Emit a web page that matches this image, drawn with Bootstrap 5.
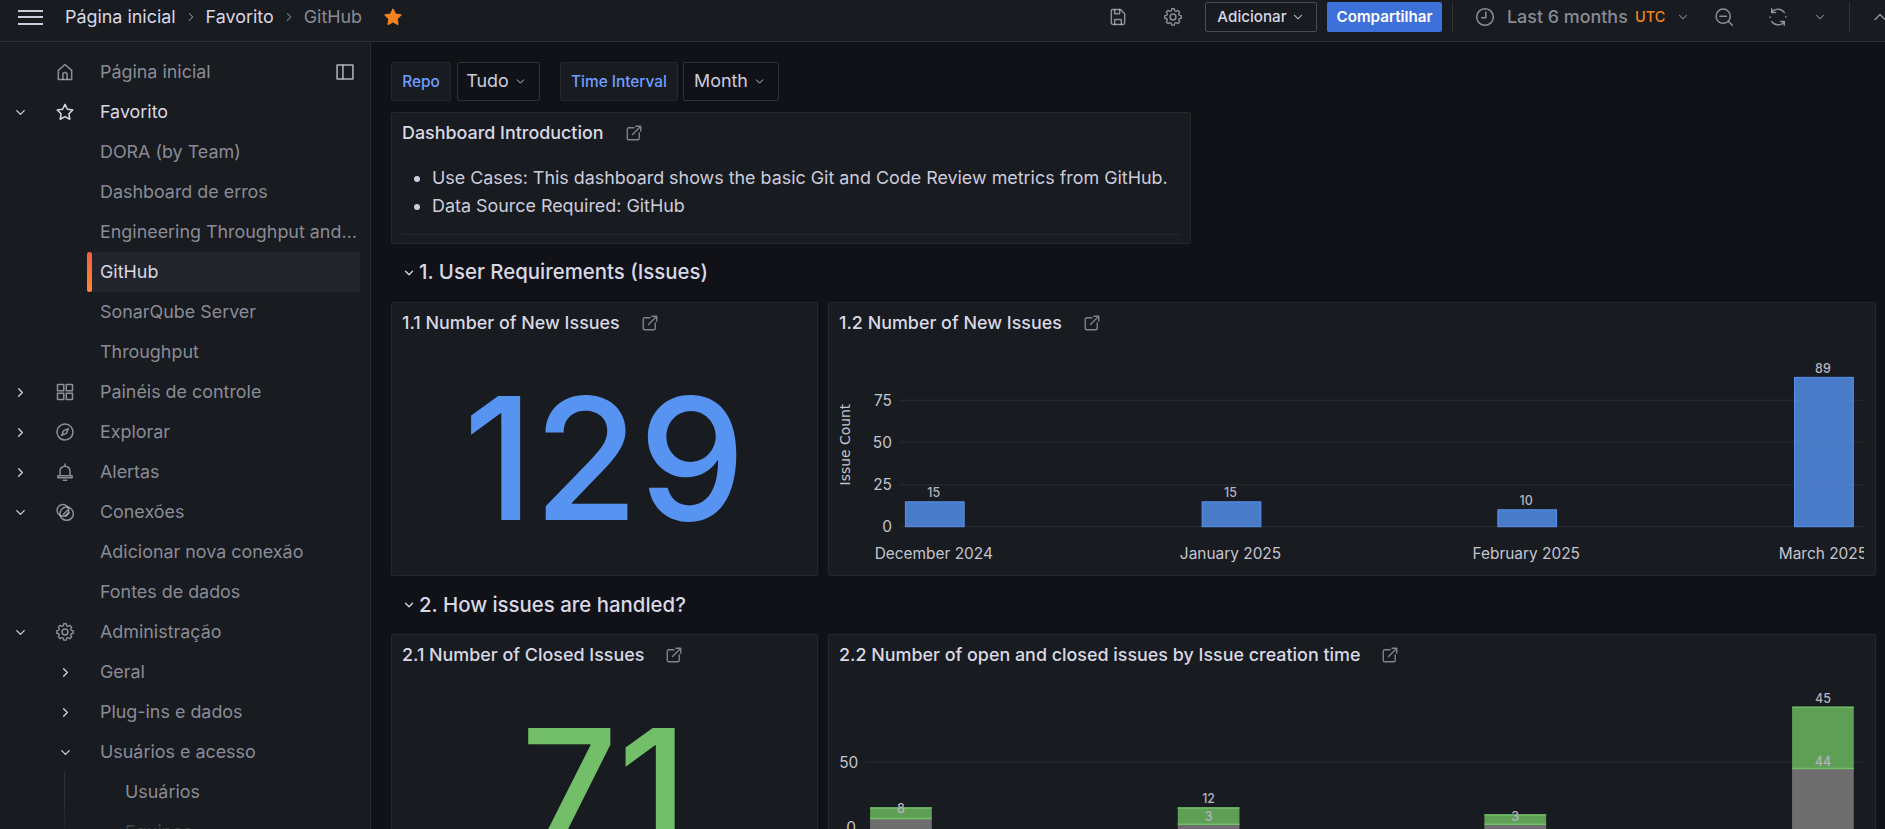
<!DOCTYPE html>
<html lang="pt-BR">
<head>
    <meta charset="UTF-8">
    <meta name="viewport" content="width=device-width, initial-scale=1.0">
    <title>GitHub - Grafana</title>
    <link href="https://cdn.jsdelivr.net/npm/bootstrap@5.3.3/dist/css/bootstrap.min.css" rel="stylesheet">
    <style>
        html, body { height: 829px; overflow: hidden; }
        body { background: #111217; color: #ccccdc; font-family: Inter, "Liberation Sans", sans-serif; font-size: 17.9px; }
        svg.gf-ic { width: 20px; height: 20px; fill: none; stroke: currentColor; stroke-width: 1.8; stroke-linecap: round; stroke-linejoin: round; flex: none; }

        .gf-top { height: 42px; background: #181b1f; border-bottom: 1px solid #2f3136; overflow: hidden; padding-bottom: 9px; padding-top: 2px; }
        .gf-burger { margin-left: 18px; width: 25px; height: 15px; border-top: 2px solid #ccccdc; border-bottom: 2px solid #ccccdc; position: relative; flex: none; }
        .gf-burger::after { content: ""; position: absolute; left: 0; right: 0; top: 4.5px; border-top: 2px solid #ccccdc; }
        .gf-crumb { margin-left: 22px; color: #d8d8e6; }
        .gf-crumb .gf-sep { width: 30px; color: #8e8e99; display: flex; justify-content: center; }
        .gf-crumb .gf-sep svg { width: 14px; height: 14px; }
        .gf-dim { color: rgba(204,204,220,.65); }
        .gf-star { margin-left: 21px; color: #f2831f; fill: currentColor !important; }
        .gf-tools { color: rgba(204,204,220,.65); margin-right: -5px; }
        .gf-gear { margin-left: 35px; }
        .gf-add { margin-left: 22px; width: 112px; height: 30px; border: 1px solid #4a4c52; border-radius: 2px; color: #d8d8e6; font-size: 15.2px; font-weight: 500; }
        .gf-add svg { width: 14px; height: 14px; margin-left: 4px; }
        .gf-share { margin-left: 10px; width: 115px; height: 30px; background: #3d71d9; color: #fff; border-radius: 2px; font-size: 15.2px; font-weight: 600; }
        .gf-div { width: 1px; height: 30px; background: #2f3136; margin-left: 10px; }
        .gf-clock { margin-left: 22px; }
        .gf-range { margin-left: 12px; width: 120px; white-space: nowrap; font-weight: 500; }
        .gf-utc { margin-left: 8px; width: 36px; color: #f2831f; font-size: 14.5px; font-weight: 500; }
        .gf-chev-sm { width: 14px !important; height: 14px !important; }
        .gf-tz-chev { margin-left: 5px; }
        .gf-zoom { margin-left: 24px; }
        .gf-sync { margin-left: 34px; }
        .gf-sync-chev { margin-left: 25px; }
        .gf-div2 { margin-left: 22px; }
        .gf-up { margin-left: 20px; }

        .gf-body { height: 787px; }
        .gf-side { width: 371px; flex: none; background: #181b1f; border-right: 1px solid #2a2c31; padding-top: 10px; overflow: hidden; position: relative; }
        .gf-side::after { content: ""; position: absolute; left: 0; right: 0; bottom: 0; height: 30px; background: linear-gradient(rgba(24,27,31,0), rgba(24,27,31,.7)); }
        .gf-item { height: 40px; color: rgba(204,204,220,.65); white-space: nowrap; position: relative; }
        .gf-item.gf-on { color: #d8d8e6; }
        .gf-slot-a { width: 40px; display: flex; justify-content: center; flex: none; color: #ccccdc; }
        .gf-slot-a svg { width: 15px; height: 15px; stroke-width: 2.2; }
        .gf-slot-b { width: 50px; display: flex; justify-content: center; flex: none; }
        .gf-lab { margin-left: 10px; }
        .gf-sub { padding-left: 100px; }
        .gf-sub2 { padding-left: 125px; }
        .gf-sub2::before { content: ""; position: absolute; left: 64px; top: 0; bottom: 0; border-left: 1px solid #2f3136; }
        .gf-nest { padding-left: 40px; }
        .gf-nest .gf-slot-b { width: 50px; color: #ccccdc; }
        .gf-nest .gf-slot-b svg { width: 15px; height: 15px; stroke-width: 2.2; }
        .gf-active { margin-left: 87px; width: 273px; padding-left: 13px; background: #22252b; border-radius: 2px; color: #d8d8e6; }
        .gf-active::before { content: ""; position: absolute; left: 0; top: 0; bottom: 0; width: 5px; border-radius: 3px; background: linear-gradient(#f55f3e, #ff8833); }
        .gf-dock { position: absolute; left: 335px; top: 20px; color: #b4b4c0; }
        .gf-clip { width: 257px; overflow: hidden; text-overflow: ellipsis; }

        .gf-main { flex: 1; padding: 20px 9px 0 20px; overflow: hidden; min-width: 0; }
        .gf-filters { height: 39px; margin-bottom: 11px; }
        .gf-flabel { height: 39px; background: #181b1f; border: 1px solid #25272c; border-radius: 2px; color: #6e9fff; font-size: 15.4px; font-weight: 500; }
        .gf-fval { height: 39px; background: #111217; border: 1px solid #2f3136; border-radius: 2px; color: #ccccdc; margin-left: 6px; }
        .gf-fval svg { width: 13px; height: 13px; margin-left: 5px; }
        #fRepo { width: 60px; }
        #fTudo { width: 83px; padding-right: 4px; }
        #fTime { width: 118px; margin-left: 20px; }
        #fMonth { width: 96px; margin-left: 5px; padding-right: 2px; }
        .gf-panel { background: #181b1f; border: 1px solid #25272c; border-radius: 2px; overflow: hidden; }
        .gf-ptitle { height: 42px; padding: 0 0 2px 10px; font-weight: 500; color: #d8d8e6; white-space: nowrap; flex: none; }
        .gf-ptitle svg { margin-left: 21px; width: 18px; height: 18px; color: rgba(204,204,220,.6); }
        #intro { width: 800px; height: 132px; }
        #intro ul { margin: 9px 10px 0; padding: 0 0 14px 30px; border-bottom: 1px solid #25272c; }
        #intro li { height: 28px; line-height: 28px; white-space: nowrap; }
        .gf-section { height: 58px; font-size: 20.4px; font-weight: 500; color: #d8d8e6; padding: 0 0 1px 11px; }
        .gf-section svg { width: 14px; height: 14px; margin-right: 3px; stroke-width: 2.2; }
        #sec2 { padding-bottom: 0; }
        .gf-rowp { gap: 10px; }
        .gf-stat { width: 427px; height: 274px; flex: none; }
        .gf-chart { flex: 1; height: 274px; min-width: 0; }
        .gf-chart > svg { display: block; }
        .gf-num { font-size: 170px; line-height: 1; font-weight: 500; flex: 1; padding-bottom: 4px; }
        .gf-blue { color: #5794f2; }
        .gf-green { color: #73bf69; }
        #stat71 { padding-top: 28px; }
        svg text { font-family: Inter, "Liberation Sans", sans-serif; fill: #c4c4d0; }
        svg .gf-val text { fill: #b4b4c0; }
    </style>
</head>
<body>
    <svg width="0" height="0" class="position-absolute">
        <symbol id="i-down" viewBox="0 0 24 24"><path d="M6 9l6 6 6-6"/></symbol>
        <symbol id="i-right" viewBox="0 0 24 24"><path d="M9 6l6 6-6 6"/></symbol>
        <symbol id="i-up" viewBox="0 0 24 24"><path d="M6 15l6-6 6 6"/></symbol>
        <symbol id="i-home" viewBox="0 0 24 24"><path d="M4 21V10l8-7 8 7v11z"/><path d="M9.5 21v-6a2.5 2.5 0 0 1 5 0v6"/></symbol>
        <symbol id="i-star" viewBox="0 0 24 24"><path d="M12 2.8l2.9 5.9 6.5.9-4.7 4.6 1.1 6.5-5.8-3.1-5.8 3.1 1.1-6.5-4.7-4.6 6.5-.9z"/></symbol>
        <symbol id="i-grid" viewBox="0 0 24 24"><rect x="3" y="3" width="7.5" height="7.5"/><rect x="13.5" y="3" width="7.5" height="7.5"/><rect x="3" y="13.5" width="7.5" height="7.5"/><rect x="13.5" y="13.5" width="7.5" height="7.5"/></symbol>
        <symbol id="i-compass" viewBox="0 0 24 24"><circle cx="12" cy="12" r="9.5" stroke-dasharray="12 1.5"/><path d="M16 8l-2.4 5.6L8 16l2.4-5.6z"/></symbol>
        <symbol id="i-bell" viewBox="0 0 24 24"><path d="M12 2.5v2M6 16v-5a6 6 0 0 1 12 0v5M3.5 16.5h17v2.5h-17zM10 22h4"/></symbol>
        <symbol id="i-link" viewBox="0 0 24 24"><circle cx="9.5" cy="10" r="7"/><circle cx="14" cy="14" r="8"/><path d="M10 15l5-5M13 17l4-4"/></symbol>
        <symbol id="i-gear" viewBox="0 0 24 24"><circle cx="12" cy="12" r="3.5"/><path d="M10.3 2.5h3.4l.6 2.7 1.9.8 2.4-1.4 2.3 2.4-1.4 2.4.8 1.9 2.7.5v3.4l-2.7.6-.8 1.9 1.4 2.3-2.3 2.4-2.4-1.4-1.9.8-.6 2.6h-3.4l-.6-2.6-1.9-.8-2.4 1.4-2.3-2.4 1.4-2.3-.8-1.9-2.7-.6v-3.4l2.7-.5.8-1.9-1.4-2.4 2.3-2.4 2.4 1.4 1.9-.8z" transform="translate(12 12) scale(.9) translate(-12 -13.5)"/></symbol>
        <symbol id="i-dock" viewBox="0 0 24 24"><rect x="2.500" y="3.500" width="19" height="17"/><path d="M9.500 3.500v17"/></symbol>
        <symbol id="i-save" viewBox="0 0 24 24"><path d="M5 3h10l5 5v11a2 2 0 0 1-2 2H6a2 2 0 0 1-2-2V4a1 1 0 0 1 1-1z"/><path d="M8 3v5h6V3M8 21v-6h8v6"/></symbol>
        <symbol id="i-clock" viewBox="0 0 24 24"><circle cx="12" cy="12" r="10"/><path d="M13 6v7H8"/></symbol>
        <symbol id="i-zoom" viewBox="0 0 24 24"><circle cx="11" cy="11" r="8.500"/><path d="M7 11h8M17.500 17.500L22 22"/></symbol>
        <symbol id="i-sync" viewBox="0 0 24 24"><path d="M19.500 6.500A9.500 9.500 0 0 0 5 5.500M2.500 12v.5M21.500 12v-.5M4.500 17.500A9.500 9.500 0 0 0 19 18.500"/><path d="M4.500 2v4.500H9M19.500 22v-4.500H15"/></symbol>
        <symbol id="i-ext" viewBox="0 0 24 24"><path d="M12 5H5a2 2 0 0 0-2 2v12a2 2 0 0 0 2 2h12a2 2 0 0 0 2-2v-7"/><path d="M10 14L21 3M14.500 3H21v6.500"/></symbol>
    </svg>

    <header class="gf-top d-flex align-items-center">
        <span class="gf-burger"></span>
        <nav class="gf-crumb d-flex align-items-center">
            <span>Página inicial</span>
            <span class="gf-sep"><svg class="gf-ic"><use href="#i-right"/></svg></span>
            <span>Favorito</span>
            <span class="gf-sep"><svg class="gf-ic"><use href="#i-right"/></svg></span>
            <span class="gf-dim">GitHub</span>
        </nav>
        <svg class="gf-ic gf-star"><use href="#i-star"/></svg>
        <div class="gf-tools ms-auto d-flex align-items-center">
            <svg class="gf-ic"><use href="#i-save"/></svg>
            <svg class="gf-ic gf-gear"><use href="#i-gear"/></svg>
            <span class="gf-add d-flex align-items-center justify-content-center">Adicionar<svg class="gf-ic"><use href="#i-down"/></svg></span>
            <span class="gf-share d-flex align-items-center justify-content-center">Compartilhar</span>
            <span class="gf-div"></span>
            <svg class="gf-ic gf-clock"><use href="#i-clock"/></svg>
            <span class="gf-range">Last 6 months</span>
            <span class="gf-utc">UTC</span>
            <svg class="gf-ic gf-chev-sm gf-tz-chev"><use href="#i-down"/></svg>
            <svg class="gf-ic gf-zoom"><use href="#i-zoom"/></svg>
            <svg class="gf-ic gf-sync"><use href="#i-sync"/></svg>
            <svg class="gf-ic gf-chev-sm gf-sync-chev"><use href="#i-down"/></svg>
            <span class="gf-div gf-div2"></span>
            <svg class="gf-ic gf-up"><use href="#i-up"/></svg>
        </div>
    </header>

    <div class="gf-body d-flex">
        <aside class="gf-side">
            <svg class="gf-ic gf-dock"><use href="#i-dock"/></svg>
            <div class="gf-item d-flex align-items-center"><span class="gf-slot-a"></span><span class="gf-slot-b"><svg class="gf-ic"><use href="#i-home"/></svg></span><span class="gf-lab">Página inicial</span></div>
            <div class="gf-item gf-on d-flex align-items-center"><span class="gf-slot-a"><svg class="gf-ic"><use href="#i-down"/></svg></span><span class="gf-slot-b"><svg class="gf-ic"><use href="#i-star"/></svg></span><span class="gf-lab">Favorito</span></div>
            <div class="gf-item gf-sub d-flex align-items-center">DORA (by Team)</div>
            <div class="gf-item gf-sub d-flex align-items-center">Dashboard de erros</div>
            <div class="gf-item gf-sub d-flex align-items-center"><span class="gf-clip">Engineering Throughput and Cycle Time</span></div>
            <div class="gf-item gf-active d-flex align-items-center">GitHub</div>
            <div class="gf-item gf-sub d-flex align-items-center">SonarQube Server</div>
            <div class="gf-item gf-sub d-flex align-items-center">Throughput</div>
            <div class="gf-item d-flex align-items-center"><span class="gf-slot-a"><svg class="gf-ic"><use href="#i-right"/></svg></span><span class="gf-slot-b"><svg class="gf-ic"><use href="#i-grid"/></svg></span><span class="gf-lab">Painéis de controle</span></div>
            <div class="gf-item d-flex align-items-center"><span class="gf-slot-a"><svg class="gf-ic"><use href="#i-right"/></svg></span><span class="gf-slot-b"><svg class="gf-ic"><use href="#i-compass"/></svg></span><span class="gf-lab">Explorar</span></div>
            <div class="gf-item d-flex align-items-center"><span class="gf-slot-a"><svg class="gf-ic"><use href="#i-right"/></svg></span><span class="gf-slot-b"><svg class="gf-ic"><use href="#i-bell"/></svg></span><span class="gf-lab">Alertas</span></div>
            <div class="gf-item d-flex align-items-center"><span class="gf-slot-a"><svg class="gf-ic"><use href="#i-down"/></svg></span><span class="gf-slot-b"><svg class="gf-ic"><use href="#i-link"/></svg></span><span class="gf-lab">Conexões</span></div>
            <div class="gf-item gf-sub d-flex align-items-center">Adicionar nova conexão</div>
            <div class="gf-item gf-sub d-flex align-items-center">Fontes de dados</div>
            <div class="gf-item d-flex align-items-center"><span class="gf-slot-a"><svg class="gf-ic"><use href="#i-down"/></svg></span><span class="gf-slot-b"><svg class="gf-ic"><use href="#i-gear"/></svg></span><span class="gf-lab">Administração</span></div>
            <div class="gf-item gf-nest d-flex align-items-center"><span class="gf-slot-b"><svg class="gf-ic"><use href="#i-right"/></svg></span><span class="gf-lab">Geral</span></div>
            <div class="gf-item gf-nest d-flex align-items-center"><span class="gf-slot-b"><svg class="gf-ic"><use href="#i-right"/></svg></span><span class="gf-lab">Plug-ins e dados</span></div>
            <div class="gf-item gf-nest d-flex align-items-center"><span class="gf-slot-b"><svg class="gf-ic"><use href="#i-down"/></svg></span><span class="gf-lab">Usuários e acesso</span></div>
            <div class="gf-item gf-sub2 d-flex align-items-center">Usuários</div>
            <div class="gf-item gf-sub2 d-flex align-items-center">Equipes</div>
        </aside>

        <main class="gf-main">
            <div class="gf-filters d-flex">
                <span id="fRepo" class="gf-flabel d-flex align-items-center justify-content-center">Repo</span>
                <span id="fTudo" class="gf-fval d-flex align-items-center justify-content-center">Tudo<svg class="gf-ic"><use href="#i-down"/></svg></span>
                <span id="fTime" class="gf-flabel d-flex align-items-center justify-content-center">Time Interval</span>
                <span id="fMonth" class="gf-fval d-flex align-items-center justify-content-center">Month<svg class="gf-ic"><use href="#i-down"/></svg></span>
            </div>

            <section id="intro" class="gf-panel">
                <div class="gf-ptitle d-flex align-items-center">Dashboard Introduction<svg class="gf-ic"><use href="#i-ext"/></svg></div>
                <ul>
                    <li>Use Cases: This dashboard shows the basic Git and Code Review metrics from GitHub.</li>
                    <li>Data Source Required: GitHub</li>
                </ul>
            </section>

            <div class="gf-section d-flex align-items-center"><svg class="gf-ic"><use href="#i-down"/></svg>1. User Requirements (Issues)</div>

            <div class="gf-rowp d-flex">
                <section class="gf-panel gf-stat d-flex flex-column">
                    <div class="gf-ptitle d-flex align-items-center">1.1 Number of New Issues<svg class="gf-ic"><use href="#i-ext"/></svg></div>
                    <div class="gf-num gf-blue d-flex align-items-center justify-content-center">129</div>
                </section>
                <section class="gf-panel gf-chart d-flex flex-column">
                    <div class="gf-ptitle d-flex align-items-center">1.2 Number of New Issues<svg class="gf-ic"><use href="#i-ext"/></svg></div>
                    <svg width="1035" height="231" viewBox="830 345 1035 231">
                        <g stroke="#2b2e33"><path d="M899 400.500H1866M899 442.500H1866M899 485.500H1866M899 527.500H1866"/></g>
                        <g fill="#5794f2" fill-opacity=".8" stroke="#5794f2">
                            <rect x="904.500" y="502.500" width="59" height="25"/>
                            <rect x="1202.500" y="502.500" width="59" height="25"/>
                            <rect x="1499.500" y="510.500" width="59" height="17"/>
                            <rect x="1797.500" y="377.500" width="59" height="150"/>
                        </g>
                        <g class="gf-val" font-size="12.500" font-weight="500" text-anchor="middle">
                            <text x="933" y="498">15</text>
                            <text x="1231" y="498">15</text>
                            <text x="1528" y="506">10</text>
                            <text x="1826" y="373">89</text>
                        </g>
                        <g font-size="15.500" text-anchor="end">
                            <text x="891" y="406">75</text>
                            <text x="891" y="448">50</text>
                            <text x="891" y="491">25</text>
                            <text x="891" y="533">0</text>
                        </g>
                        <g font-size="15.500" text-anchor="middle">
                            <text x="933" y="560">December 2024</text>
                            <text x="1231" y="560">January 2025</text>
                            <text x="1528" y="560">February 2025</text>
                            <text x="1826" y="560">March 2025</text>
                        </g>
                        <text transform="translate(849 445) rotate(-90)" text-anchor="middle" font-size="14" style="font-family:'DejaVu Sans',sans-serif">Issue Count</text>
                    </svg>
                </section>
            </div>

            <div id="sec2" class="gf-section d-flex align-items-center"><svg class="gf-ic"><use href="#i-down"/></svg>2. How issues are handled?</div>

            <div class="gf-rowp d-flex">
                <section class="gf-panel gf-stat d-flex flex-column">
                    <div class="gf-ptitle d-flex align-items-center">2.1 Number of Closed Issues<svg class="gf-ic"><use href="#i-ext"/></svg></div>
                    <div id="stat71" class="gf-num gf-green d-flex align-items-start justify-content-center">71</div>
                </section>
                <section class="gf-panel gf-chart d-flex flex-column">
                    <div class="gf-ptitle d-flex align-items-center">2.2 Number of open and closed issues by Issue creation time<svg class="gf-ic"><use href="#i-ext"/></svg></div>
                    <svg width="1035" height="231" viewBox="830 677 1035 231">
                        <path d="M864 762.500H1866" stroke="#2b2e33"/>
                        <g fill="#6e6e6e">
                            <rect x="869" y="819" width="62" height="40"/>
                            <rect x="1178" y="825" width="62" height="40"/>
                            <rect x="1486" y="825" width="62" height="40"/>
                            <rect x="1795" y="769" width="62" height="100"/>
                        </g>
                        <g fill="#5f9e55">
                            <rect x="869" y="808" width="62" height="11"/>
                            <rect x="1178" y="808" width="62" height="17"/>
                            <rect x="1486" y="815" width="62" height="10"/>
                            <rect x="1795" y="707" width="62" height="62"/>
                        </g>
                        <path d="M869 808.500h62M1178 808.500h62M1486 815.500h62M1795 707.500h62M869 819h62M1178 825h62M1486 825h62M1795 769h62" stroke="#73bf69" stroke-width="1.500"/>
                        <g class="gf-val" font-size="12.500" font-weight="500" text-anchor="middle">
                            <text x="900" y="814">8</text>
                            <text x="1209" y="804">12</text>
                            <text x="1209" y="822">3</text>
                            <text x="1517" y="822">3</text>
                            <text x="1826" y="703">45</text>
                            <text x="1826" y="766">44</text>
                        </g>
                        <g font-size="15.500">
                            <text x="838" y="768">50</text>
                            <text x="845" y="834">0</text>
                        </g>
                    </svg>
                </section>
            </div>
        </main>
    </div>
    <script src="https://cdn.jsdelivr.net/npm/bootstrap@5.3.3/dist/js/bootstrap.bundle.min.js"></script>
</body>
</html>
